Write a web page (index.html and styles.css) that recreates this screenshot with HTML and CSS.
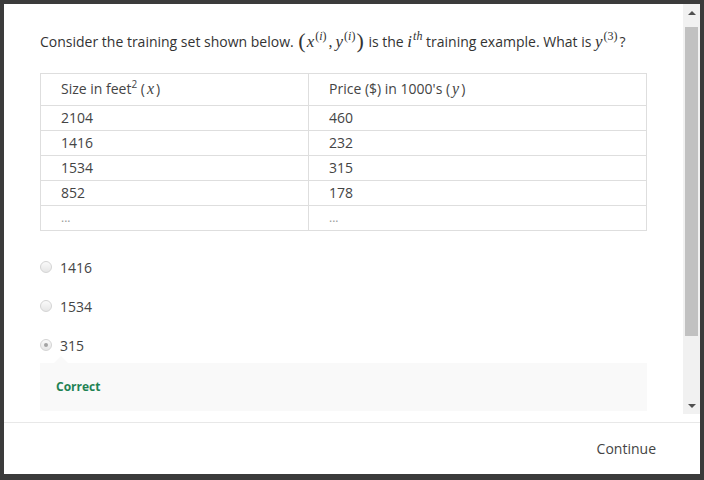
FILE: index.html
```html
<!DOCTYPE html>
<html>
<head>
<meta charset="utf-8">
<link rel="stylesheet" href="styles.css">
</head>
<body>
<div class="backdrop">
  <div class="modal">
    <div class="body">
      <div class="content">
        <p class="question">Consider the training set shown below. <span class="paren">(</span><span class="m">x</span><sup class="msup">(<span class="mi">i</span>)</sup><span class="comma">,</span><span class="m">y</span><sup class="msup">(<span class="mi">i</span>)</sup><span class="paren">)</span> is the <span class="m">i</span><sup class="msup"><span class="mi">th</span></sup> training example. What is <span class="m">y</span><sup class="msup">(3)</sup><span class="qm">?</span></p>
        <table class="data">
          <thead>
            <tr><th class="col1">Size in feet<sup class="tsup">2</sup> (<span class="mt">x</span>)</th><th class="col2">Price ($) in 1000's (<span class="mt">y</span>)</th></tr>
          </thead>
          <tbody>
            <tr><td>2104</td><td>460</td></tr>
            <tr><td>1416</td><td>232</td></tr>
            <tr><td>1534</td><td>315</td></tr>
            <tr><td>852</td><td>178</td></tr>
            <tr><td class="dots">...</td><td class="dots">...</td></tr>
          </tbody>
        </table>
        <div class="options">
          <div class="option"><span class="radio"></span><span>1416</span></div>
          <div class="option"><span class="radio"></span><span>1534</span></div>
          <div class="option"><span class="radio checked"></span><span>315</span></div>
        </div>
        <div class="feedback"><span class="correct">Correct</span></div>
      </div>
      <div class="scrollbar">
        <div class="btn"><span class="arrow-up"></span></div>
        <div class="track"><div class="thumb"></div></div>
        <div class="btn"><span class="arrow-down"></span></div>
      </div>
    </div>
    <div class="footer"><span class="continue">Continue</span></div>
  </div>
</div>
</body>
</html>
```

FILE: styles.css
```css
html, body {
  margin: 0;
  padding: 0;
}
body {
  width: 704px;
  height: 480px;
  overflow: hidden;
  font-family: "Open Sans", "Liberation Sans", sans-serif;
  color: #333;
}
.backdrop {
  width: 704px;
  height: 480px;
  box-sizing: border-box;
  padding: 4px 4px 6px 4px;
  background: #3b3b3b;
}
.modal {
  width: 696px;
  height: 470px;
  background: #fff;
  display: flex;
  flex-direction: column;
}
.body {
  height: 410px;
  display: flex;
  flex-direction: row;
}
.content {
  flex: 1;
  overflow: hidden;
  padding: 27px 36px 0 36px;
}
.question {
  margin: 0;
  font-size: 14px;
  line-height: 22px;
  color: #333;
  white-space: nowrap;
}
.m {
  font-family: "Liberation Serif", "Times New Roman", serif;
  font-style: italic;
  font-size: 17px;
}
.mi {
  font-family: "Liberation Serif", "Times New Roman", serif;
  font-style: italic;
}
.msup {
  font-family: "Liberation Serif", "Times New Roman", serif;
  font-size: 12px;
  line-height: 0;
  vertical-align: 7px;
  margin-left: 1px;
}
.qm {
  margin-left: 2px;
}
.comma {
  font-family: "Liberation Serif", serif;
  font-size: 16px;
  margin: 0 3px 0 2px;
}
.paren {
  font-family: "Liberation Serif", serif;
  font-size: 22px;
  line-height: 0;
  vertical-align: -1px;
  margin: 0 1px;
}
.data {
  margin-top: 20px;
  width: 607px;
  border-collapse: collapse;
  border: 1px solid #dedede;
  font-size: 14px;
  color: #444;
}
.data th, .data td {
  border: 1px solid #dedede;
  text-align: left;
  font-weight: normal;
  padding: 2px 20px;
  line-height: 20px;
}
.data th {
  padding: 5px 20px 6px 20px;
}
.col1 { width: 227px; }
.tsup {
  font-size: 10px;
  line-height: 0;
  vertical-align: 6px;
}
.mt {
  font-family: "Liberation Serif", serif;
  font-style: italic;
  font-size: 16px;
  margin: 0 2px;
}
.dots {
  color: #999;
  font-size: 12px;
}
.options {
  margin-top: 26px;
  display: flex;
  flex-direction: column;
  gap: 19px;
}
.option {
  display: flex;
  align-items: center;
  gap: 8px;
  height: 20px;
  font-size: 14px;
  color: #444;
}
.radio {
  width: 10px;
  height: 10px;
  border-radius: 50%;
  border: 1px solid #d4d4d4;
  background: linear-gradient(#fafafa, #e6e6e6);
  display: flex;
  align-items: center;
  justify-content: center;
}
.radio.checked::after {
  content: "";
  width: 4px;
  height: 4px;
  border-radius: 50%;
  background: #a3a3a3;
}
.feedback {
  margin-top: 8px;
  background: #f9f9f9;
  padding: 13px 16px 15px 16px;
  line-height: 18px;
  position: relative;
}
.feedback::before {
  content: "";
  position: absolute;
  left: 14px;
  top: -7px;
  border-left: 7px solid transparent;
  border-right: 7px solid transparent;
  border-bottom: 7px solid #f9f9f9;
}
.correct {
  font-size: 12px;
  font-weight: 700;
  color: #1f8354;
}
.scrollbar {
  width: 17px;
  background: #f1f1f1;
  display: flex;
  flex-direction: column;
}
.btn {
  height: 17px;
  display: flex;
  align-items: center;
  justify-content: center;
}
.arrow-up {
  border-left: 4px solid transparent;
  border-right: 4px solid transparent;
  border-bottom: 4px solid #505050;
}
.arrow-down {
  border-left: 4px solid transparent;
  border-right: 4px solid transparent;
  border-top: 4px solid #505050;
}
.track {
  flex: 1;
  padding: 6px 2px 0 2px;
}
.thumb {
  height: 309px;
  background: #c1c1c1;
}
.footer {
  margin-top: 8px;
  border-top: 1px solid #e8e8e8;
  flex: 1;
  display: flex;
  align-items: center;
  justify-content: flex-end;
  padding-right: 44px;
}
.continue {
  font-size: 14px;
  color: #444;
}
```
